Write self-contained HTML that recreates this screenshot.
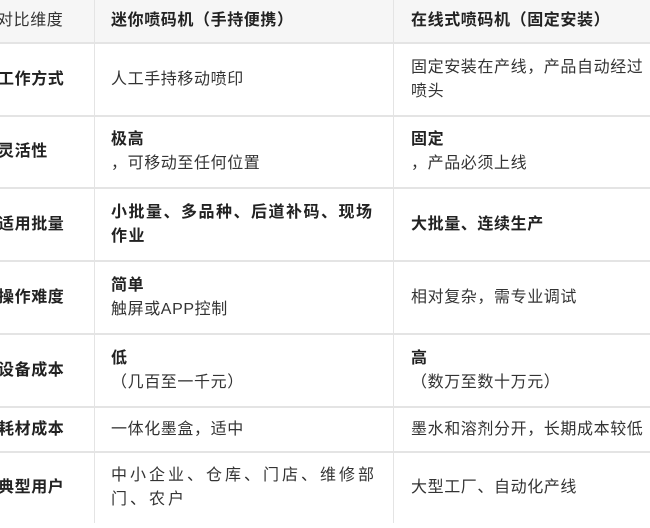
<!DOCTYPE html>
<html><head><meta charset="utf-8"><style>
body{margin:0;width:650px;height:528px;overflow:hidden;background:#fff;font-family:"Liberation Sans","Noto Sans CJK SC",sans-serif;font-size:16px;letter-spacing:0.6px;color:#333;}
.c{position:absolute;box-sizing:border-box;display:flex;flex-direction:column;justify-content:center;line-height:24px;white-space:nowrap;}
.l{position:absolute;background:#e4e4e4;}
b{font-weight:bold;color:#222}
</style></head><body>
<div style="position:absolute;left:0;top:0;width:650px;height:42px;background:#f6f6f6"></div>
<div class="l" style="left:0;top:42px;width:650px;height:2px"></div>
<div class="l" style="left:0;top:115px;width:650px;height:2px"></div>
<div class="l" style="left:0;top:187px;width:650px;height:2px"></div>
<div class="l" style="left:0;top:260px;width:650px;height:2px"></div>
<div class="l" style="left:0;top:333px;width:650px;height:2px"></div>
<div class="l" style="left:0;top:406px;width:650px;height:2px"></div>
<div class="l" style="left:0;top:451px;width:650px;height:2px"></div>
<div class="l" style="left:94px;top:0;width:1px;height:523px"></div>
<div class="l" style="left:393px;top:0;width:1px;height:523px"></div>

<div class="c" style="left:-3px;top:0;height:42px;">对比维度</div>
<div class="c" style="left:111px;top:0;height:42px"><b>迷你喷码机（手持便携）</b></div>
<div class="c" style="left:411px;top:0;height:42px"><b>在线式喷码机（固定安装）</b></div>

<div class="c" style="left:-2px;top:44px;height:71px"><b>工作方式</b></div>
<div class="c" style="left:111px;top:44px;height:71px">人工手持移动喷印</div>
<div class="c" style="left:411px;top:44px;height:71px">固定安装在产线，产品自动经过<br>喷头</div>

<div class="c" style="left:-2px;top:117px;height:70px"><b>灵活性</b></div>
<div class="c" style="left:111px;top:117px;height:70px"><b>极高</b>，可移动至任何位置</div>
<div class="c" style="left:411px;top:117px;height:70px"><b>固定</b>，产品必须上线</div>

<div class="c" style="left:-2px;top:189px;height:71px"><b>适用批量</b></div>
<div class="c" style="left:111px;top:189px;height:71px;letter-spacing:1.5px"><b>小批量、多品种、后道补码、现场<br>作业</b></div>
<div class="c" style="left:411px;top:189px;height:71px"><b>大批量、连续生产</b></div>

<div class="c" style="left:-2px;top:262px;height:71px"><b>操作难度</b></div>
<div class="c" style="left:111px;top:262px;height:71px"><b>简单</b>触屏或APP控制</div>
<div class="c" style="left:411px;top:262px;height:71px">相对复杂，需专业调试</div>

<div class="c" style="left:-2px;top:335px;height:71px"><b>设备成本</b></div>
<div class="c" style="left:111px;top:335px;height:71px"><b>低</b>（几百至一千元）</div>
<div class="c" style="left:411px;top:335px;height:71px"><b>高</b>（数万至数十万元）</div>

<div class="c" style="left:-2px;top:408px;height:43px"><b>耗材成本</b></div>
<div class="c" style="left:111px;top:408px;height:43px">一体化墨盒，适中</div>
<div class="c" style="left:411px;top:408px;height:43px">墨水和溶剂分开，长期成本较低</div>

<div class="c" style="left:-2px;top:453px;height:70px"><b>典型用户</b></div>
<div class="c" style="left:111px;top:453px;height:70px;letter-spacing:3px">中小企业、仓库、门店、维修部<br>门、农户</div>
<div class="c" style="left:411px;top:453px;height:70px">大型工厂、自动化产线</div>
</body></html>
